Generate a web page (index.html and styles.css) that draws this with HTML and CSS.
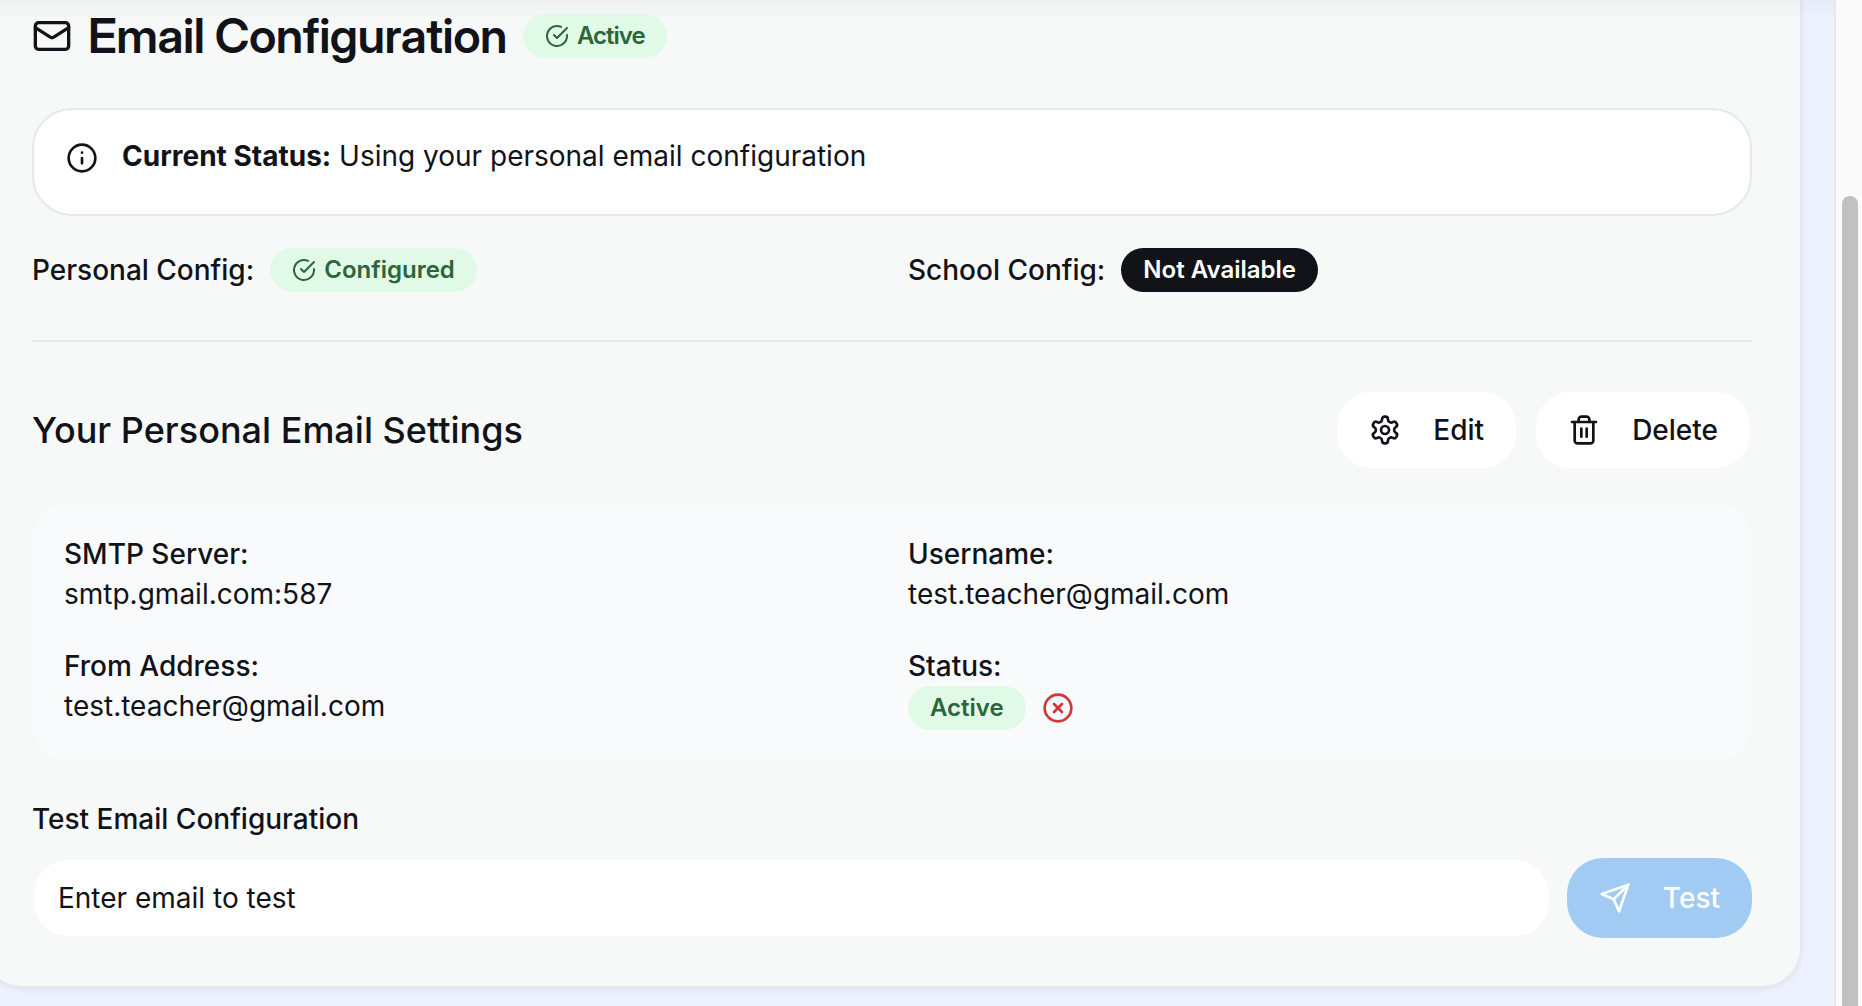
FILE: index.html
```html
<!DOCTYPE html>
<html lang="en">
<head>
<meta charset="utf-8">
<meta name="viewport" content="width=device-width, initial-scale=1">
<title>Email Configuration</title>
<link rel="stylesheet" href="styles.css">
</head>
<body>
<svg class="sprite" aria-hidden="true">
  <symbol id="mail" viewBox="0 0 24 24"><rect width="20" height="16" x="2" y="4" rx="2"/><path d="m22 7-8.97 5.7a1.94 1.94 0 0 1-2.06 0L2 7"/></symbol>
  <symbol id="check" viewBox="0 0 24 24"><path d="M22 11.08V12a10 10 0 1 1-5.93-9.14"/><path d="m9 11 3 3L22 4"/></symbol>
  <symbol id="info" viewBox="0 0 24 24"><circle cx="12" cy="12" r="10"/><path d="M12 16v-4M12 8h.01"/></symbol>
  <symbol id="gear" viewBox="0 0 24 24"><path d="M12.22 2h-.44a2 2 0 0 0-2 2v.18a2 2 0 0 1-1 1.73l-.43.25a2 2 0 0 1-2 0l-.15-.08a2 2 0 0 0-2.73.73l-.22.38a2 2 0 0 0 .73 2.73l.15.1a2 2 0 0 1 1 1.72v.51a2 2 0 0 1-1 1.74l-.15.09a2 2 0 0 0-.73 2.73l.22.38a2 2 0 0 0 2.73.73l.15-.08a2 2 0 0 1 2 0l.43.25a2 2 0 0 1 1 1.73V20a2 2 0 0 0 2 2h.44a2 2 0 0 0 2-2v-.18a2 2 0 0 1 1-1.73l.43-.25a2 2 0 0 1 2 0l.15.08a2 2 0 0 0 2.73-.73l.22-.39a2 2 0 0 0-.73-2.73l-.15-.08a2 2 0 0 1-1-1.74v-.5a2 2 0 0 1 1-1.74l.15-.09a2 2 0 0 0 .73-2.73l-.22-.38a2 2 0 0 0-2.73-.73l-.15.08a2 2 0 0 1-2 0l-.43-.25a2 2 0 0 1-1-1.73V4a2 2 0 0 0-2-2z"/><circle cx="12" cy="12" r="3"/></symbol>
  <symbol id="trash" viewBox="0 0 24 24"><path d="M3 6h18"/><path d="M19 6v14c0 1-1 2-2 2H7c-1 0-2-1-2-2V6"/><path d="M8 6V4c0-1 1-2 2-2h4c1 0 2 1 2 2v2"/><path d="M10 11v6M14 11v6"/></symbol>
  <symbol id="fail" viewBox="0 0 24 24"><circle cx="12" cy="12" r="10"/><path d="m15 9-6 6M9 9l6 6"/></symbol>
  <symbol id="send" viewBox="0 0 24 24"><path d="m22 2-7 20-4-9-9-4Z"/><path d="M22 2 11 13"/></symbol>
</svg>

<main class="page">
  <section class="card">
    <header class="card-header">
      <svg class="icon icon-lg" aria-hidden="true"><use href="#mail"/></svg>
      <h1 class="title">Email Configuration</h1>
      <span class="badge badge-success title-badge"><svg class="icon icon-sm" aria-hidden="true"><use href="#check"/></svg>Active</span>
    </header>

    <div class="alert" role="status">
      <svg class="icon alert-icon" aria-hidden="true"><use href="#info"/></svg>
      <p class="alert-text"><strong>Current Status:</strong> Using your personal email configuration</p>
    </div>

    <div class="columns">
      <div class="inline">
        <span class="label">Personal Config:</span>
        <span class="badge badge-success"><svg class="icon icon-sm" aria-hidden="true"><use href="#check"/></svg>Configured</span>
      </div>
      <div class="inline">
        <span class="label">School Config:</span>
        <span class="badge badge-dark">Not Available</span>
      </div>
    </div>

    <hr class="divider">

    <div class="section-head">
      <h2 class="subtitle">Your Personal Email Settings</h2>
      <div class="inline">
        <button class="button button-outline" type="button"><svg class="icon" aria-hidden="true"><use href="#gear"/></svg>Edit</button>
        <button class="button button-outline" type="button"><svg class="icon" aria-hidden="true"><use href="#trash"/></svg>Delete</button>
      </div>
    </div>

    <dl class="settings columns">
      <div><dt class="label">SMTP Server:</dt><dd class="value">smtp.gmail.com:587</dd></div>
      <div><dt class="label">Username:</dt><dd class="value">test.teacher@gmail.com</dd></div>
      <div><dt class="label">From Address:</dt><dd class="value">test.teacher@gmail.com</dd></div>
      <div>
        <dt class="label">Status:</dt>
        <dd class="value inline"><span class="badge badge-success">Active</span><svg class="icon icon-danger" role="img" aria-label="Not verified"><use href="#fail"/></svg></dd>
      </div>
    </dl>

    <form class="test">
      <label class="label test-label" for="test-email">Test Email Configuration</label>
      <div class="test-row">
        <input class="input" id="test-email" type="email" placeholder="Enter email to test">
        <button class="button button-primary" type="submit" disabled><svg class="icon" aria-hidden="true"><use href="#send"/></svg>Test</button>
      </div>
    </form>
  </section>
</main>
<div class="scrollbar" aria-hidden="true"><div class="thumb"></div></div>
</body>
</html>
```
FILE: styles.css
```css
* { box-sizing: border-box; }

body {
  display: flex;
  height: 100vh;
  margin: 0;
  overflow: hidden;
  background: #eef2ff;
  color: #111318;
  font: 400 28px/40px Inter, "Liberation Sans", sans-serif;
}

h1, h2, p, dl, dd { margin: 0; }

.sprite { position: absolute; width: 0; height: 0; }

.icon {
  flex: none;
  width: 32px;
  height: 32px;
  fill: none;
  stroke: currentColor;
  stroke-width: 2;
  stroke-linecap: round;
  stroke-linejoin: round;
}
.icon-sm { width: 24px; height: 24px; }
.icon-lg { width: 40px; height: 40px; }
.icon-danger { color: #d03632; }

.page {
  position: relative;
  flex: 1;
  min-width: 0;
  overflow: hidden;
}

/* shade cast by the bar above the scrolled content */
.page::before {
  content: "";
  position: absolute;
  inset: 0 0 auto;
  height: 20px;
  background: linear-gradient(rgba(0, 0, 0, .03), rgba(0, 0, 0, 0));
}

.card {
  margin: 0 32px 0 -18px;
  padding: 12px 48px 48px;
  border: 2px solid #e2e9ef;
  border-top: 0;
  border-radius: 0 0 40px 40px;
  background: #f6f9f8;
  background-clip: padding-box;
  box-shadow: 0 2px 6px rgba(0, 0, 0, .06);
}

.card-header {
  display: flex;
  align-items: center;
  gap: 16px;
  margin-bottom: 48px;
}
.title {
  font-family: "Inter Display", Inter, "Liberation Sans", sans-serif;
  font-size: 48px;
  font-weight: 600;
  line-height: 48px;
  letter-spacing: -0.01em;
}
.title-badge { letter-spacing: -1px; }

.badge {
  display: inline-flex;
  align-items: center;
  gap: 8px;
  padding: 6px 22px;
  border-radius: 22px;
  font-size: 24px;
  font-weight: 600;
  line-height: 32px;
  white-space: nowrap;
}
.badge-success { background: #e1fae8; color: #2c6539; }
.badge-dark { background: #111318; color: #fff; }

.alert {
  display: flex;
  gap: 24px;
  margin-bottom: 32px;
  padding: 26px 32px 38px;
  border: 2px solid #e2e9ef;
  border-radius: 40px;
  background: #fff;
}
.alert-icon { margin-top: 6px; }
.alert strong { font-weight: 700; }

.columns {
  display: grid;
  grid-template-columns: 1fr 1fr;
  gap: 32px;
}
.inline {
  display: flex;
  align-items: center;
  gap: 16px;
}
.label { font-weight: 500; }

.divider {
  height: 2px;
  margin: 48px 0;
  border: 0;
  background: #e2e9ef;
}

.section-head {
  display: flex;
  align-items: center;
  justify-content: space-between;
  margin-bottom: 32px;
}
.subtitle { font-size: 36px; font-weight: 500; }

.button {
  display: inline-flex;
  align-items: center;
  gap: 32px;
  height: 80px;
  padding: 0 32px;
  border: 0;
  border-radius: 36px;
  font: inherit;
  font-weight: 500;
}
.button-outline {
  border: 2px solid #f6f9fa;
  background: #fff;
  color: #111318;
}
.button-primary { background: #a1cbf3; color: #fff; }

.settings {
  padding: 32px;
  border-radius: 40px;
  background: #f9fafc;
}

.test { margin-top: 32px; }
.test-label { display: block; margin-bottom: 14px; line-height: 50px; }
.test-row { display: flex; gap: 16px; }
.input {
  flex: 1;
  min-width: 0;
  height: 80px;
  padding: 0 24px;
  border: 2px solid #f6f9fa;
  border-radius: 36px;
  background: #fff;
  color: inherit;
  font: inherit;
}
.input::placeholder { color: #111318; opacity: 1; }

.scrollbar {
  display: flex;
  width: 28px;
  padding: 196px 4px 0 6px;
  border-left: 2px solid #e8e8e8;
  background: #fafafa;
}
.thumb {
  flex: 1;
  border-radius: 8px 8px 0 0;
  background: #c1c1c1;
}
```
